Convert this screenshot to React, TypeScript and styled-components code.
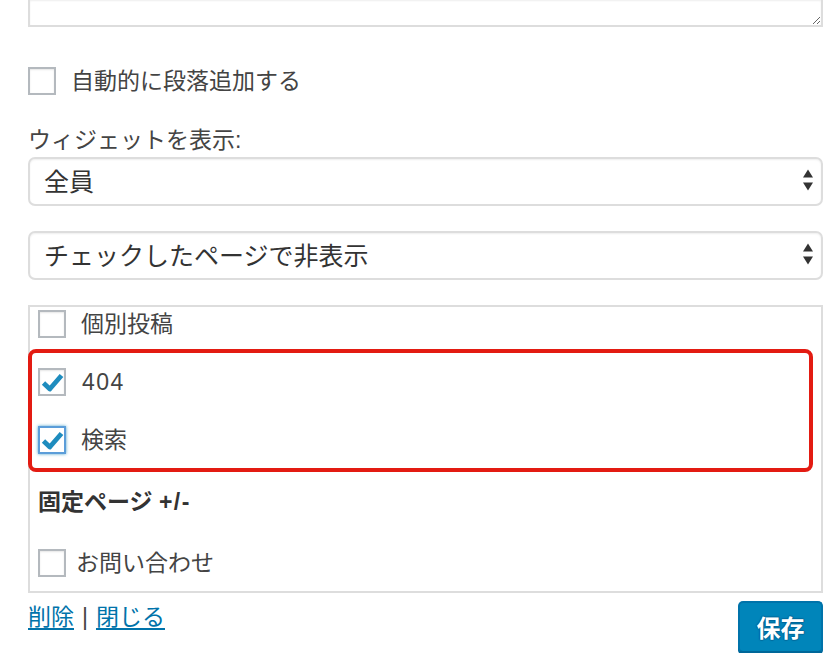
import React from "react";
import styled, { createGlobalStyle } from "styled-components";

const Global = createGlobalStyle`
  html, body {
    margin: 0;
    padding: 0;
    background: #ffffff;
  }
  body {
    font-family: "Liberation Sans", "Noto Sans CJK JP", sans-serif;
    color: #444444;
  }
`;

const Page = styled.div`
  width: 836px;
  box-sizing: border-box;
  padding: 0 13px 0 28px;
  display: flex;
  flex-direction: column;
`;

const TextArea = styled.textarea`
  display: block;
  width: 100%;
  height: 27px;
  box-sizing: border-box;
  margin: 0;
  padding: 0;
  border: 2px solid #dddddd;
  border-top: none;
  resize: vertical;
  outline: none;
  background: #ffffff;
  box-shadow: inset 0 1px 2px rgba(0, 0, 0, 0.07);
`;

const CheckRow = styled.label<{ $top: number; $gap: number }>`
  display: flex;
  align-items: center;
  gap: ${(p) => p.$gap}px;
  height: 28px;
  margin-top: ${(p) => p.$top}px;
  cursor: pointer;
`;

const Box = styled.span<{ $focus?: boolean }>`
  flex: none;
  width: 28px;
  height: 28px;
  box-sizing: border-box;
  border: 2px solid ${(p) => (p.$focus ? "#5b9dd9" : "#b4b9be")};
  background: #ffffff;
  box-shadow: ${(p) =>
    p.$focus
      ? "0 0 3px rgba(30, 140, 190, 0.8)"
      : "inset 0 1px 2px rgba(0, 0, 0, 0.1)"};
  display: flex;
  align-items: center;
  justify-content: center;
`;

const RowText = styled.span`
  font-size: 23px;
  line-height: 28px;
  color: #444444;
  white-space: nowrap;
`;

const NumText = styled(RowText)`
  letter-spacing: 1.5px;
`;

const FieldLabel = styled.div`
  margin-top: 30px;
  font-size: 23px;
  line-height: 30px;
  color: #444444;
`;

const SelectWrap = styled.div<{ $top: number }>`
  position: relative;
  margin-top: ${(p) => p.$top}px;
`;

const Select = styled.select`
  display: block;
  width: 100%;
  height: 49px;
  box-sizing: border-box;
  appearance: none;
  -webkit-appearance: none;
  margin: 0;
  padding: 0 40px 0 14px;
  border: 2px solid #dddddd;
  border-radius: 7px;
  background: #ffffff;
  box-shadow: inset 0 1px 2px rgba(0, 0, 0, 0.07);
  font-family: "Liberation Sans", "Noto Sans CJK JP", sans-serif;
  font-size: 25px;
  color: #333333;
  outline: none;
`;

const Arrows = styled.svg`
  position: absolute;
  right: 9px;
  top: 12px;
  pointer-events: none;
`;

const ListBox = styled.div`
  margin-top: 25px;
  border: 2px solid #dddddd;
  padding: 3px 8px 14px 8px;
  display: flex;
  flex-direction: column;
  background: #ffffff;
`;

const Highlight = styled.div`
  margin: 11px 0 0 -10px;
  border: 4px solid #e31b12;
  border-radius: 8px;
  padding: 15px 6px 14px 6px;
  display: flex;
  flex-direction: column;
  gap: 30px;
`;

const ItemRow = styled.label<{ $gap: number; $top?: number }>`
  display: flex;
  align-items: center;
  gap: ${(p) => p.$gap}px;
  height: 28px;
  margin-top: ${(p) => p.$top ?? 0}px;
  cursor: pointer;
`;

const GroupHeading = styled.div`
  margin-top: 15px;
  font-size: 23px;
  line-height: 30px;
  font-weight: 700;
  color: #333333;
`;

const Toggle = styled.span`
  letter-spacing: 1.5px;
`;

const Footer = styled.div`
  margin-top: 8px;
  display: flex;
  justify-content: space-between;
  align-items: flex-start;
`;

const Links = styled.div`
  display: flex;
  align-items: baseline;
  gap: 8px;
  font-size: 23px;
  line-height: 26px;
  padding-top: 3px;
  color: #444444;
`;

const Link = styled.a`
  color: #0073aa;
  text-decoration: underline;
  text-underline-offset: 3px;
  text-decoration-thickness: 2px;
  cursor: pointer;
`;

const SaveButton = styled.button`
  width: 85px;
  height: 52px;
  box-sizing: border-box;
  border: 2px solid #0073aa;
  border-bottom-color: #006799;
  border-radius: 5px;
  background: #0085ba;
  box-shadow: 0 2px 0 #006799;
  color: #ffffff;
  font-family: "Liberation Sans", "Noto Sans CJK JP", sans-serif;
  font-size: 24px;
  font-weight: 700;
  text-shadow: 0 -1px 1px #006799, 1px 0 1px #006799, 0 1px 1px #006799,
    -1px 0 1px #006799;
  cursor: pointer;
  padding: 0 0 2px 0;
`;

function Check() {
  return (
    <svg width="23" height="21" viewBox="0 0 23 21">
      <path
        d="M2.5 11 L8.8 17 L20.5 3.5"
        fill="none"
        stroke="#1e8cbe"
        strokeWidth="4.8"
        strokeLinejoin="round"
      />
    </svg>
  );
}

function UpDown() {
  return (
    <Arrows width="12" height="24" viewBox="0 0 12 24">
      <path d="M1 8.5 L6 0.5 L11 8.5 Z" fill="#333" />
      <path d="M1 13.5 L11 13.5 L6 21.5 Z" fill="#333" />
    </Arrows>
  );
}

type BoxProps = { checked?: boolean; focus?: boolean };
function CheckBox({ checked, focus }: BoxProps) {
  return <Box $focus={focus}>{checked ? <Check /> : null}</Box>;
}

export default function App() {
  return (
    <>
      <Global />
      <Page>
        <TextArea defaultValue="" />
        <CheckRow $top={40} $gap={15}>
          <CheckBox />
          <RowText>自動的に段落追加する</RowText>
        </CheckRow>
        <FieldLabel>ウィジェットを表示:</FieldLabel>
        <SelectWrap $top={2}>
          <Select defaultValue="all">
            <option value="all">全員</option>
          </Select>
          <UpDown />
        </SelectWrap>
        <SelectWrap $top={25}>
          <Select defaultValue="hide">
            <option value="hide">チェックしたページで非表示</option>
          </Select>
          <UpDown />
        </SelectWrap>
        <ListBox>
          <ItemRow $gap={15}>
            <CheckBox />
            <RowText>個別投稿</RowText>
          </ItemRow>
          <Highlight>
            <ItemRow $gap={16}>
              <CheckBox checked />
              <NumText>404</NumText>
            </ItemRow>
            <ItemRow $gap={15}>
              <CheckBox checked focus />
              <RowText>検索</RowText>
            </ItemRow>
          </Highlight>
          <GroupHeading>
            固定ページ <Toggle>+/-</Toggle>
          </GroupHeading>
          <ItemRow $gap={10} $top={32}>
            <CheckBox />
            <RowText>お問い合わせ</RowText>
          </ItemRow>
        </ListBox>
        <Footer>
          <Links>
            <Link>削除</Link>
            <span>|</span>
            <Link>閉じる</Link>
          </Links>
          <SaveButton>保存</SaveButton>
        </Footer>
      </Page>
    </>
  );
}
